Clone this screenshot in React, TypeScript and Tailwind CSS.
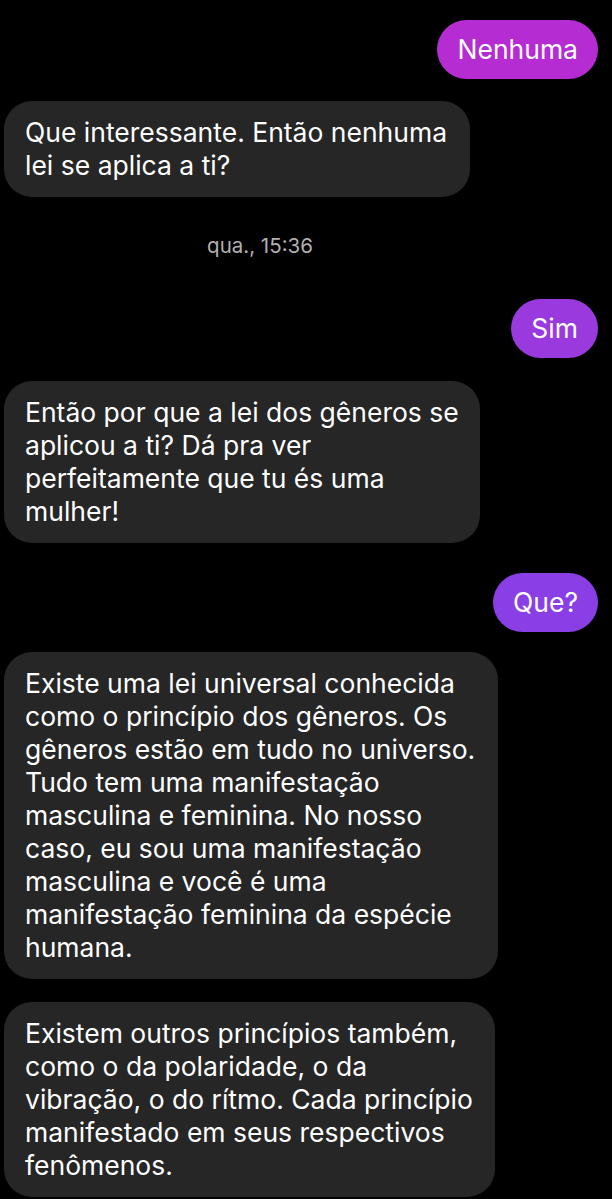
type Msg =
  | { kind: 'out'; text: string; color: string; mt: string }
  | { kind: 'in'; lines: string[]; width: string; mt: string }
  | { kind: 'time'; text: string; mt: string }

const messages: Msg[] = [
  { kind: 'out', text: 'Nenhuma', color: 'bg-[#b42cd2]', mt: 'mt-[20px]' },
  {
    kind: 'in',
    lines: ['Que interessante. Então nenhuma', 'lei se aplica a ti?'],
    width: 'w-[466px]',
    mt: 'mt-[22px]',
  },
  { kind: 'time', text: 'qua., 15:36', mt: 'mt-[37px]' },
  { kind: 'out', text: 'Sim', color: 'bg-[#9a39de]', mt: 'mt-[41px]' },
  {
    kind: 'in',
    lines: [
      'Então por que a lei dos gêneros se',
      'aplicou a ti? Dá pra ver',
      'perfeitamente que tu és uma',
      'mulher!',
    ],
    width: 'w-[476px]',
    mt: 'mt-[23px]',
  },
  { kind: 'out', text: 'Que?', color: 'bg-[#8a3fe6]', mt: 'mt-[30px]' },
  {
    kind: 'in',
    lines: [
      'Existe uma lei universal conhecida',
      'como o princípio dos gêneros. Os',
      'gêneros estão em tudo no universo.',
      'Tudo tem uma manifestação',
      'masculina e feminina. No nosso',
      'caso, eu sou uma manifestação',
      'masculina e você é uma',
      'manifestação feminina da espécie',
      'humana.',
    ],
    width: 'w-[494px]',
    mt: 'mt-[20px]',
  },
  {
    kind: 'in',
    lines: [
      'Existem outros princípios também,',
      'como o da polaridade, o da',
      'vibração, o do rítmo. Cada princípio',
      'manifestado em seus respectivos',
      'fenômenos.',
    ],
    width: 'w-[491px]',
    mt: 'mt-[23px]',
  },
]

export default function App() {
  return (
    <div className="min-h-[1199px] w-[612px] overflow-hidden bg-black font-['Inter',sans-serif] text-white">
      <div className="flex flex-col pl-[4px] pr-[14px]">
        {messages.map((m, i) => {
          if (m.kind === 'time') {
            return (
              <div key={i} className={`${m.mt} pr-[82px] text-center text-[20.5px] leading-[24px] text-[#b0b0b0]`}>
                {m.text}
              </div>
            )
          }
          if (m.kind === 'out') {
            return (
              <div key={i} className={`${m.mt} flex justify-end`}>
                <div className={`${m.color} rounded-full px-[20px] text-[26.5px] leading-[59px]`}>{m.text}</div>
              </div>
            )
          }
          return (
            <div key={i} className={`${m.mt} ${m.width} rounded-[28px] bg-[#262626] px-[21px] py-[15px] text-[26.5px] leading-[33px]`}>
              {m.lines.map((l, j) => (
                <div key={j} className="whitespace-nowrap">{l}</div>
              ))}
            </div>
          )
        })}
      </div>
    </div>
  )
}
